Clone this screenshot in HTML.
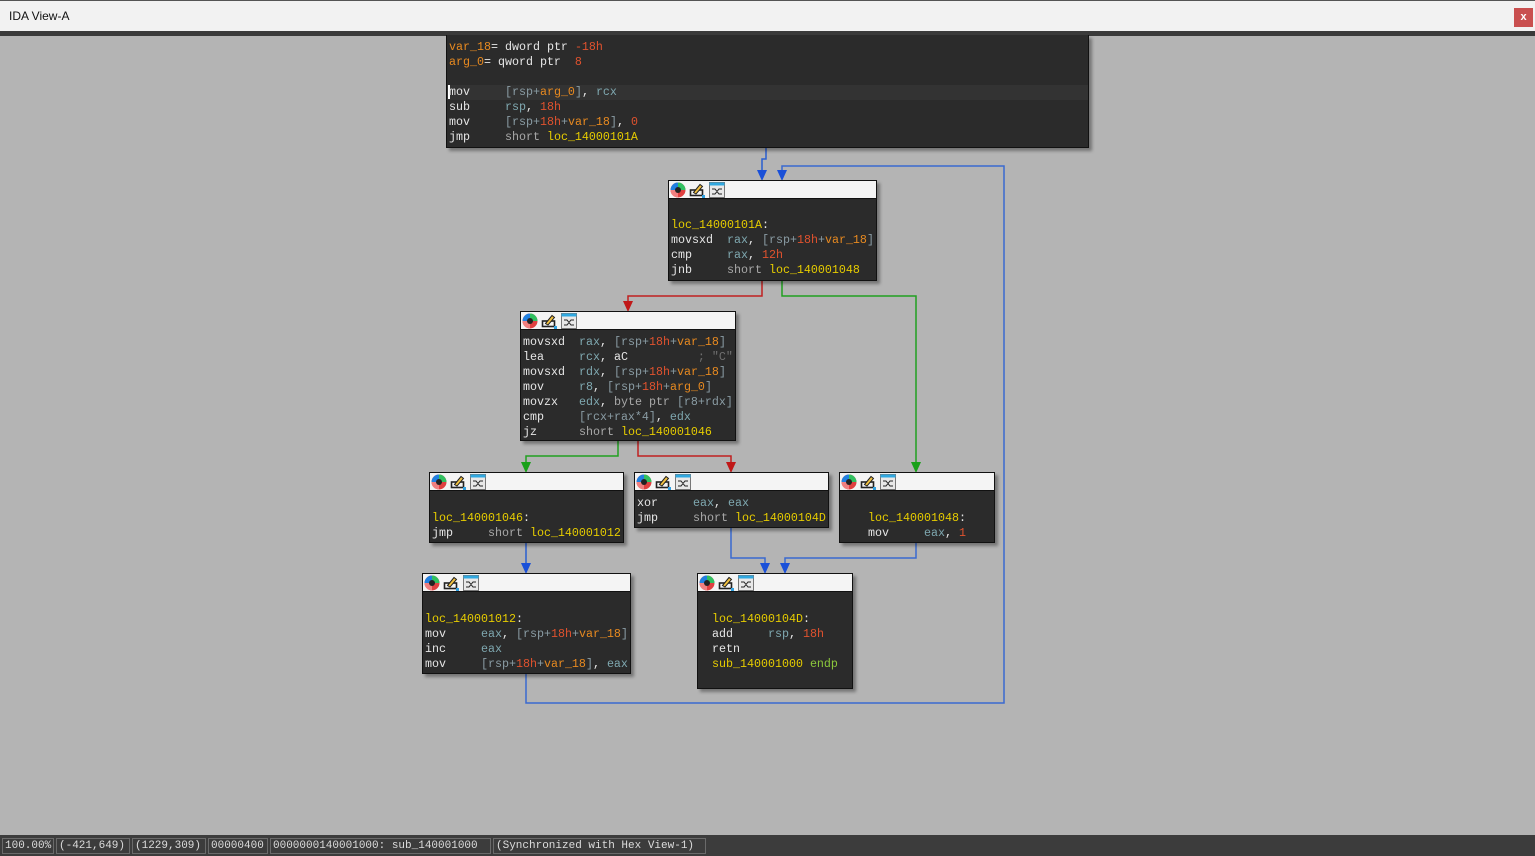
<!DOCTYPE html>
<html><head><meta charset="utf-8"><style>
*{margin:0;padding:0;box-sizing:border-box}
body{width:1535px;height:856px;background:#b4b4b4;position:relative;overflow:hidden;font-family:"Liberation Mono",monospace}
#title{position:absolute;left:0;top:0;width:1535px;height:31px;background:#f2f2f2;border-top:1px solid #555;font-family:"Liberation Sans",sans-serif;font-size:12px;color:#111}
#title span{position:absolute;left:9px;top:8px}
#close{position:absolute;left:1514px;top:7px;width:19px;height:19px;background:#c94f4f;color:#fff;font-size:11px;text-align:center;line-height:18px;font-weight:bold}
#strip{position:absolute;left:0;top:31px;width:1535px;height:5px;background:#3a3a3a}
.n{position:absolute;background:#2b2b2b;border:1px solid #111;box-shadow:3px 3px 3px rgba(0,0,0,.35)}
.h{height:18px;background:#f4f4f4;border-bottom:1px solid #111;position:relative}
.ic{position:absolute;top:1px;width:16px;height:16px}
.t{position:absolute;font-size:11.67px;line-height:15px;white-space:pre;color:#e6e6e6}
.r{color:#7fa8b0}.b{color:#8a9ca4}.x{color:#e0522e}.v{color:#e88a20}.l{color:#e6cc00}.s{color:#a8a8a8}.c{color:#707070}.g{color:#8cc83c}
#status{position:absolute;left:0;top:835px;width:1535px;height:21px;background:#3c3c3c}
.cell{position:absolute;top:3px;height:16px;border:1px solid #6a6a6a;color:#dcdcdc;font-size:11px;line-height:15px;padding:0 2px;white-space:pre}
</style></head><body>
<div id="title"><span>IDA View-A</span><div id="close">x</div></div>
<div id="strip"></div>

<svg width="1535" height="856" style="position:absolute;left:0;top:0">
<g fill="none" stroke-width="1.5">
<polyline stroke="#2a5fd0" points="766,147 766,159 762,159 762,174"/>
<polyline stroke="#3a6ad0" points="526,673 526,703 1004,703 1004,166 782,166 782,174"/>
<polyline stroke="#c02020" points="762,280 762,296 628,296 628,305"/>
<polyline stroke="#20a020" points="782,280 782,296 916,296 916,466"/>
<polyline stroke="#20a020" points="618,440 618,456 526,456 526,466"/>
<polyline stroke="#c02020" points="638,440 638,456 731,456 731,466"/>
<polyline stroke="#2a5fd0" points="526,542 526,567"/>
<polyline stroke="#3a6ad0" points="731,527 731,558 765,558 765,567"/>
<polyline stroke="#3a6ad0" points="916,542 916,558 785,558 785,567"/>
</g>
<g>
<polygon fill="#1a50d8" points="757,170 767,170 762,181"/>
<polygon fill="#1a50d8" points="777,170 787,170 782,181"/>
<polygon fill="#c01818" points="623,301 633,301 628,312"/>
<polygon fill="#18a018" points="911,462 921,462 916,473"/>
<polygon fill="#18a018" points="521,462 531,462 526,473"/>
<polygon fill="#c01818" points="726,462 736,462 731,473"/>
<polygon fill="#1a50d8" points="521,563 531,563 526,574"/>
<polygon fill="#1a50d8" points="760,563 770,563 765,574"/>
<polygon fill="#1a50d8" points="780,563 790,563 785,574"/>
</g>
</svg>

<div class="n" style="left:446px;top:35px;width:643px;height:113px;border-top:none">
<div style="position:absolute;left:0;top:50px;width:641px;height:15px;background:#333"></div>
<div style="position:absolute;left:1px;top:50px;width:2px;height:14px;background:#fff"></div>
<div class="t" style="left:2px;top:5px"><span class="v">var_18</span>= dword ptr <span class="x">-18h</span>
<span class="v">arg_0</span>= qword ptr  <span class="x">8</span>

mov     <span class="b">[rsp+</span><span class="v">arg_0</span><span class="b">]</span>, <span class="r">rcx</span>
sub     <span class="r">rsp</span>, <span class="x">18h</span>
mov     <span class="b">[rsp+</span><span class="x">18h</span><span class="b">+</span><span class="v">var_18</span><span class="b">]</span>, <span class="x">0</span>
jmp     <span class="s">short</span> <span class="l">loc_14000101A</span></div>
</div>

<div class="n" style="left:668px;top:180px;width:209px;height:101px">
<div class="h"><svg class="ic" style="left:1px" viewBox="0 0 16 16"><circle cx="8" cy="8" r="7.5" fill="#e04040"/><path d="M8 8L8 .5A7.5 7.5 0 0 1 15.5 8Z" fill="#30c060"/><path d="M8 8L.5 8A7.5 7.5 0 0 1 8 .5Z" fill="#2080e0"/><path d="M8 8L8 15.5A7.5 7.5 0 0 1 .5 8Z" fill="#f08080"/><circle cx="8" cy="8" r="3" fill="#222"/></svg><svg class="ic" style="left:20px" viewBox="0 0 16 16"><rect x="1.5" y="8" width="12" height="5.5" fill="none" stroke="#222" stroke-width="1.6"/><path d="M4.5 10.5L11 2.5L13.5 4.5L7 12Z" fill="#f0c040" stroke="#222"/><rect x="13" y="13" width="3" height="3" fill="#30a0e0"/></svg><svg class="ic" style="left:40px" viewBox="0 0 16 16"><rect x=".5" y=".5" width="15" height="15" fill="#e8e8e8" stroke="#777"/><rect x=".5" y=".5" width="15" height="3" fill="#30a8e0"/><path d="M3 7L6 7L10 12L13 12M3 12L6 12L10 7L13 7" stroke="#222" fill="none"/></svg></div>
<div class="t" style="left:2px;top:37px"><span class="l">loc_14000101A</span>:
movsxd  <span class="r">rax</span>, <span class="b">[rsp+</span><span class="x">18h</span><span class="b">+</span><span class="v">var_18</span><span class="b">]</span>
cmp     <span class="r">rax</span>, <span class="x">12h</span>
jnb     <span class="s">short</span> <span class="l">loc_140001048</span></div>
</div>

<div class="n" style="left:520px;top:311px;width:216px;height:130px">
<div class="h ico"></div>
<div class="t" style="left:2px;top:23px">movsxd  <span class="r">rax</span>, <span class="b">[rsp+</span><span class="x">18h</span><span class="b">+</span><span class="v">var_18</span><span class="b">]</span>
lea     <span class="r">rcx</span>, aC          <span class="c">; "C"</span>
movsxd  <span class="r">rdx</span>, <span class="b">[rsp+</span><span class="x">18h</span><span class="b">+</span><span class="v">var_18</span><span class="b">]</span>
mov     <span class="r">r8</span>, <span class="b">[rsp+</span><span class="x">18h</span><span class="b">+</span><span class="v">arg_0</span><span class="b">]</span>
movzx   <span class="r">edx</span>, <span class="s">byte ptr</span> <span class="b">[r8+rdx]</span>
cmp     <span class="b">[rcx+rax*4]</span>, <span class="r">edx</span>
jz      <span class="s">short</span> <span class="l">loc_140001046</span></div>
</div>

<div class="n" style="left:429px;top:472px;width:195px;height:71px">
<div class="h ico"></div>
<div class="t" style="left:2px;top:38px"><span class="l">loc_140001046</span>:
jmp     <span class="s">short</span> <span class="l">loc_140001012</span></div>
</div>

<div class="n" style="left:634px;top:472px;width:195px;height:56px">
<div class="h ico"></div>
<div class="t" style="left:2px;top:23px">xor     <span class="r">eax</span>, <span class="r">eax</span>
jmp     <span class="s">short</span> <span class="l">loc_14000104D</span></div>
</div>

<div class="n" style="left:839px;top:472px;width:156px;height:71px">
<div class="h ico"></div>
<div class="t" style="left:28px;top:38px"><span class="l">loc_140001048</span>:
mov     <span class="r">eax</span>, <span class="x">1</span></div>
</div>

<div class="n" style="left:422px;top:573px;width:209px;height:101px">
<div class="h ico"></div>
<div class="t" style="left:2px;top:38px"><span class="l">loc_140001012</span>:
mov     <span class="r">eax</span>, <span class="b">[rsp+</span><span class="x">18h</span><span class="b">+</span><span class="v">var_18</span><span class="b">]</span>
inc     <span class="r">eax</span>
mov     <span class="b">[rsp+</span><span class="x">18h</span><span class="b">+</span><span class="v">var_18</span><span class="b">]</span>, <span class="r">eax</span></div>
</div>

<div class="n" style="left:697px;top:573px;width:156px;height:116px">
<div class="h ico"></div>
<div class="t" style="left:14px;top:38px"><span class="l">loc_14000104D</span>:
add     <span class="r">rsp</span>, <span class="x">18h</span>
retn
<span class="l">sub_140001000</span> <span class="g">endp</span></div>
</div>

<div id="status">
<div class="cell" style="left:2px;width:52px">100.00%</div>
<div class="cell" style="left:56px;width:74px">(-421,649)</div>
<div class="cell" style="left:132px;width:74px">(1229,309)</div>
<div class="cell" style="left:208px;width:60px">00000400</div>
<div class="cell" style="left:270px;width:221px">0000000140001000: sub_140001000</div>
<div class="cell" style="left:493px;width:213px">(Synchronized with Hex View-1)</div>
</div>

<script>
var tpl=document.querySelectorAll('.h')[0].innerHTML;
document.querySelectorAll('.h.ico').forEach(function(e){e.innerHTML=tpl;});
</script>
</body></html>
